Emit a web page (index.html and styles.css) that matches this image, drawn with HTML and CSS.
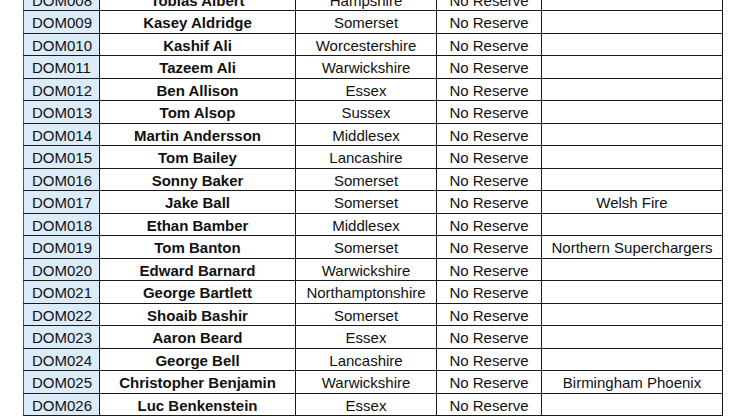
FILE: index.html
```html
<!DOCTYPE html>
<html lang="en">
<head>
<meta charset="utf-8">
<title>Players</title>
<link rel="stylesheet" href="styles.css">
</head>
<body>
<div class="sheet">
<table class="players">
<colgroup>
<col class="c-id"><col class="c-name"><col class="c-county"><col class="c-res"><col class="c-team">
</colgroup>
<tbody>
<tr><td class="id">DOM008</td><td class="name">Tobias Albert</td><td>Hampshire</td><td>No Reserve</td><td></td></tr>
<tr><td class="id">DOM009</td><td class="name">Kasey Aldridge</td><td>Somerset</td><td>No Reserve</td><td></td></tr>
<tr><td class="id">DOM010</td><td class="name">Kashif Ali</td><td>Worcestershire</td><td>No Reserve</td><td></td></tr>
<tr><td class="id">DOM011</td><td class="name">Tazeem Ali</td><td>Warwickshire</td><td>No Reserve</td><td></td></tr>
<tr><td class="id">DOM012</td><td class="name">Ben Allison</td><td>Essex</td><td>No Reserve</td><td></td></tr>
<tr><td class="id">DOM013</td><td class="name">Tom Alsop</td><td>Sussex</td><td>No Reserve</td><td></td></tr>
<tr><td class="id">DOM014</td><td class="name">Martin Andersson</td><td>Middlesex</td><td>No Reserve</td><td></td></tr>
<tr><td class="id">DOM015</td><td class="name">Tom Bailey</td><td>Lancashire</td><td>No Reserve</td><td></td></tr>
<tr><td class="id">DOM016</td><td class="name">Sonny Baker</td><td>Somerset</td><td>No Reserve</td><td></td></tr>
<tr><td class="id">DOM017</td><td class="name">Jake Ball</td><td>Somerset</td><td>No Reserve</td><td>Welsh Fire</td></tr>
<tr><td class="id">DOM018</td><td class="name">Ethan Bamber</td><td>Middlesex</td><td>No Reserve</td><td></td></tr>
<tr><td class="id">DOM019</td><td class="name">Tom Banton</td><td>Somerset</td><td>No Reserve</td><td>Northern Superchargers</td></tr>
<tr><td class="id">DOM020</td><td class="name">Edward Barnard</td><td>Warwickshire</td><td>No Reserve</td><td></td></tr>
<tr><td class="id">DOM021</td><td class="name">George Bartlett</td><td>Northamptonshire</td><td>No Reserve</td><td></td></tr>
<tr><td class="id">DOM022</td><td class="name">Shoaib Bashir</td><td>Somerset</td><td>No Reserve</td><td></td></tr>
<tr><td class="id">DOM023</td><td class="name">Aaron Beard</td><td>Essex</td><td>No Reserve</td><td></td></tr>
<tr><td class="id">DOM024</td><td class="name">George Bell</td><td>Lancashire</td><td>No Reserve</td><td></td></tr>
<tr><td class="id">DOM025</td><td class="name">Christopher Benjamin</td><td>Warwickshire</td><td>No Reserve</td><td>Birmingham Phoenix</td></tr>
<tr><td class="id">DOM026</td><td class="name">Luc Benkenstein</td><td>Essex</td><td>No Reserve</td><td></td></tr>
</tbody>
</table>
</div>
</body>
</html>
```

FILE: styles.css
```css
html, body {
  margin: 0;
  padding: 0;
  background: #ffffff;
}

.sheet {
  padding-left: 23px;
  overflow: hidden;
  height: 419px;
}

.players {
  margin-top: -12.2px;
  border-collapse: collapse;
  table-layout: fixed;
  width: 699px;
  font-family: "Liberation Sans", Arial, sans-serif;
  font-size: 15px;
  color: #111111;
}

.c-id { width: 76px; }
.c-name { width: 196px; }
.c-county { width: 141px; }
.c-res { width: 105px; }
.c-team { width: 181px; }

.players td {
  border: 1px solid #1a1a1a;
  height: 22.5px;
  padding: 2px 2px 0 2px;
  text-align: center;
  white-space: nowrap;
  line-height: 18px;
  box-sizing: border-box;
}

.players td.id {
  background: #dcebf8;
  text-align: left;
  padding-left: 8px;
  border-left-color: #555555;
}

.players td.name {
  font-weight: bold;
}
```
